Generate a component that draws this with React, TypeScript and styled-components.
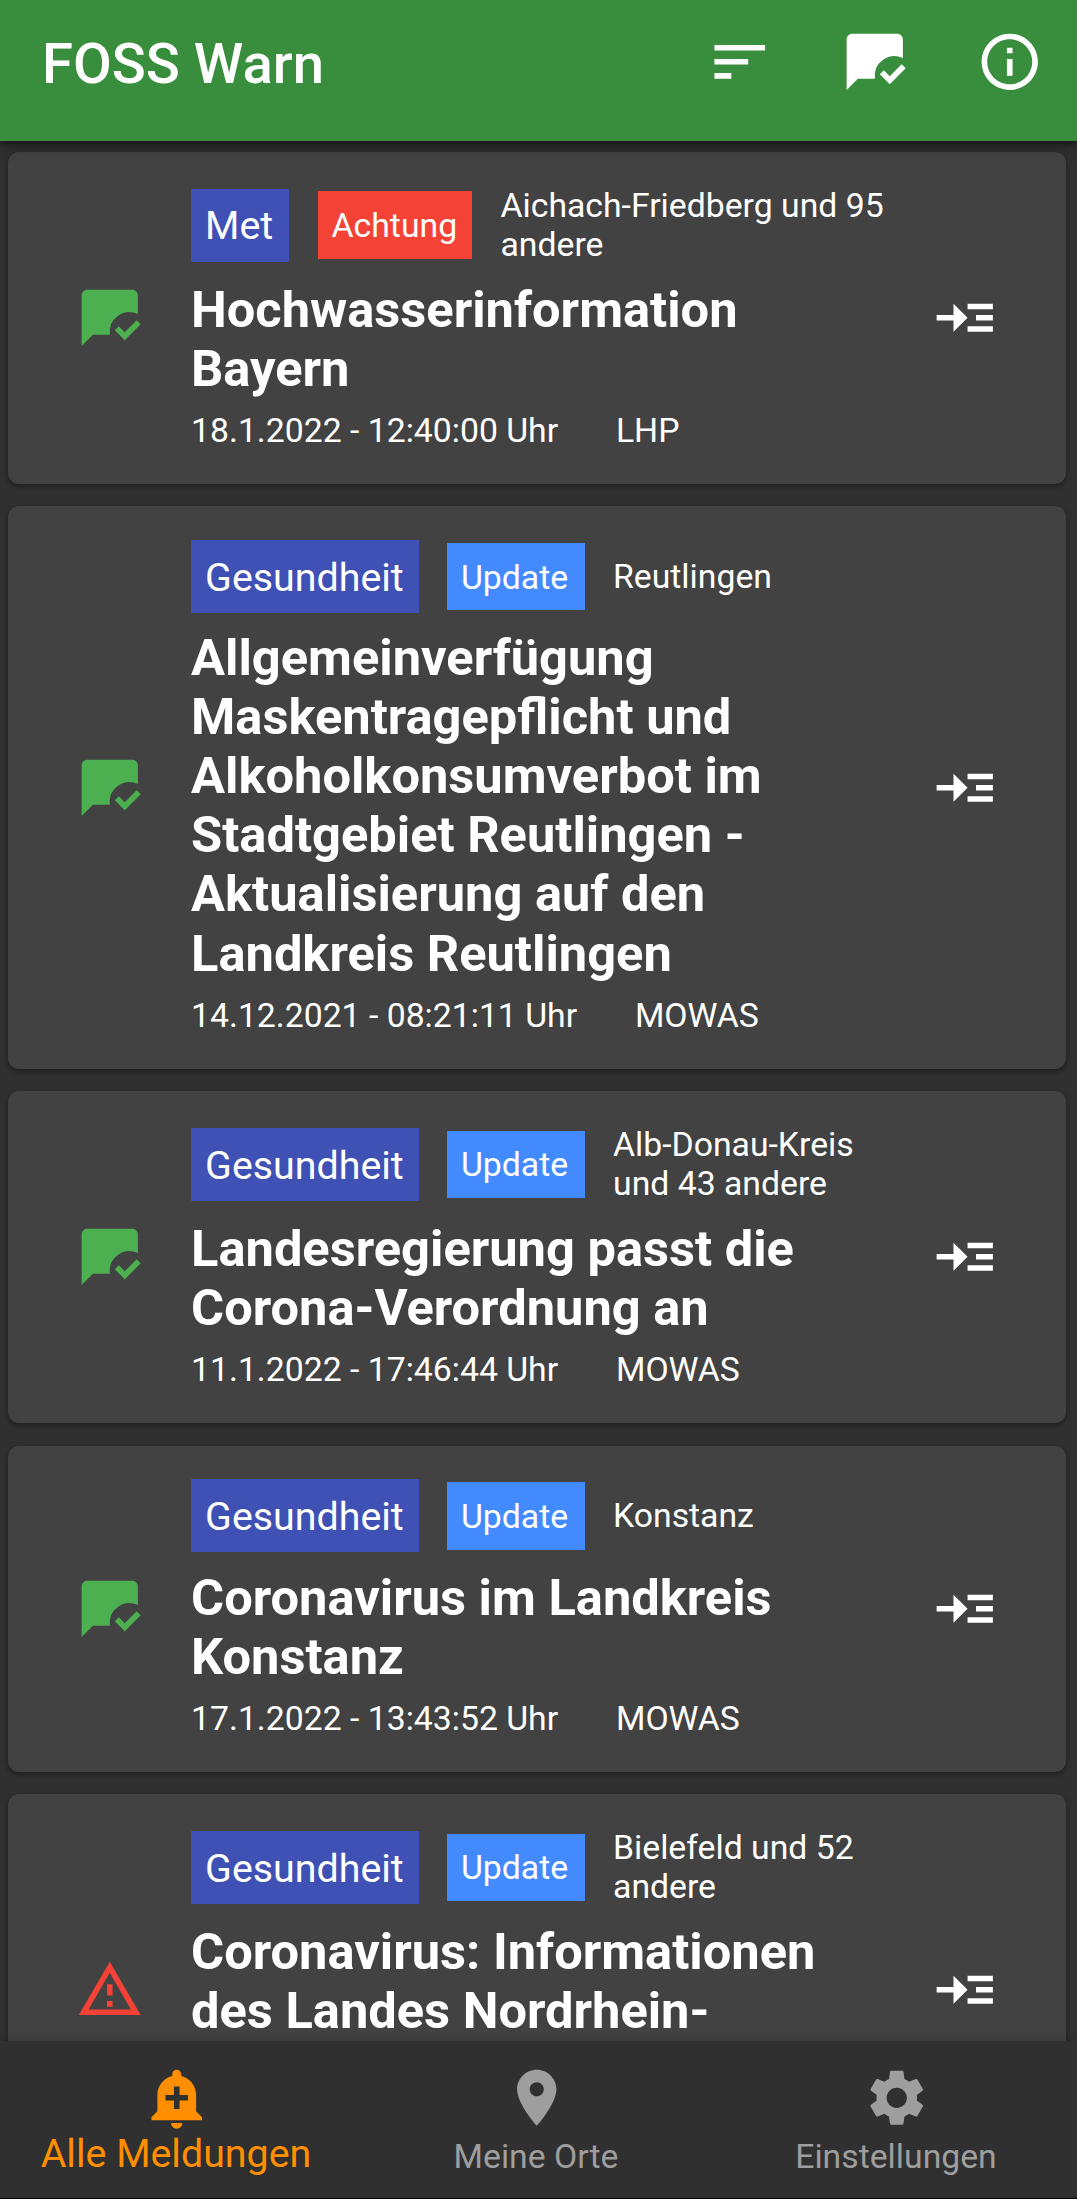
import React from 'react';
import styled, { createGlobalStyle } from 'styled-components';

const GlobalStyle = createGlobalStyle`
  *, *::before, *::after { box-sizing: border-box; }
  body {
    margin: 0;
    background: #303030;
    font-family: Roboto, "Liberation Sans", sans-serif;
    color: #fff;
  }
`;

const Screen = styled.div`
  display: flex;
  flex-direction: column;
  width: 1077px;
  height: 2199px;
  overflow: hidden;
  background: #303030;
`;

const AppBar = styled.header`
  display: flex;
  align-items: center;
  flex: none;
  height: 140.6px;
  padding: 0 0 16.4px 42px;
  background: #388e3c;
  box-shadow: 0 5px 12px rgba(0, 0, 0, 0.4), 0 2px 5px rgba(0, 0, 0, 0.3);
  z-index: 1;
`;

const AppTitle = styled.h1`
  flex: 1;
  margin: 0;
  padding-top: 3px;
  font-size: 56.25px;
  font-weight: 500;
  line-height: 66px;
`;

const IconButton = styled.button<{ $color?: string }>`
  display: flex;
  align-items: center;
  justify-content: center;
  flex: none;
  width: 135px;
  height: 124px;
  padding: 0;
  border: 0;
  background: none;
  color: ${(p) => p.$color ?? '#fff'};
`;

const Svg = styled.svg`
  display: block;
  flex: none;
  width: 67.5px;
  height: 67.5px;
  fill: currentColor;
`;

const List = styled.main`
  display: flex;
  flex-direction: column;
  flex: 1;
  min-height: 0;
  gap: 22.5px;
  padding: 11.4px 11.25px 0 8.25px;
  overflow: hidden;
`;

const Card = styled.article`
  display: flex;
  align-items: center;
  flex: none;
  padding: 33.75px;
  border-radius: 11.25px;
  background: #424242;
  box-shadow: 0 3px 4px rgba(0, 0, 0, 0.22), 0 1px 5px rgba(0, 0, 0, 0.18);
`;

const CardBody = styled.div`
  display: flex;
  flex-direction: column;
  flex: 1;
  min-width: 0;
  gap: 14.06px;
  padding-left: 14.06px;
`;

const TagRow = styled.div`
  display: flex;
  align-items: center;
  gap: 28.1px;
`;

const CategoryTag = styled.span<{ $width: number }>`
  flex: none;
  width: ${(p) => p.$width}px;
  padding: 14.76px 0 13.36px 14.06px;
  background: #3f51b5;
  font-size: 39.375px;
  line-height: 45px;
  white-space: nowrap;
`;

const StatusTag = styled.span<{ $color: string; $width: number }>`
  flex: none;
  width: ${(p) => p.$width}px;
  padding: 14.76px 0 13.36px 14.06px;
  background: ${(p) => p.$color};
  font-size: 33.75px;
  line-height: 39.375px;
  white-space: nowrap;
`;

const Place = styled.span`
  flex: 1;
  min-width: 0;
  font-size: 33.75px;
  line-height: 39.375px;
`;

const Headline = styled.h2<{ $minLines: number }>`
  min-height: ${(p) => p.$minLines * 59.06}px;
  margin: 1px 0 -1px;
  font-size: 50.625px;
  font-weight: 700;
  line-height: 59.06px;
`;

const Meta = styled.div`
  display: flex;
  gap: 57.8px;
  min-height: 39.375px;
  font-size: 33.75px;
  line-height: 39.375px;
`;

const NavBar = styled.nav`
  display: grid;
  grid-template-columns: 357fr 360fr 360fr;
  flex: none;
  height: 158.5px;
  border-bottom: 1px solid #000;
  background: #303030;
  box-shadow: 0 -2px 8px rgba(0, 0, 0, 0.12);
  z-index: 1;
`;

const NavItem = styled.a<{ $active?: boolean }>`
  display: flex;
  flex-direction: column;
  align-items: center;
  justify-content: space-between;
  padding: ${(p) => (p.$active ? '23.2px 3px 22.2px 0' : '23.2px 0 22.2px')};
  color: ${(p) => (p.$active ? '#ff8f00' : '#9e9e9e')};
  font-size: ${(p) => (p.$active ? '39.375px' : '33.75px')};
  line-height: ${(p) => (p.$active ? '45px' : '39.375px')};
  white-space: nowrap;
`;

const NavLabel = styled.span`
  margin-right: 2px;
`;

const icons = {
  sort: 'M3 18h6v-2H3v2zM3 6v2h18V6H3zm0 7h12v-2H3v2z',
  chatRead:
    'M4 2h16c1.1 0 2 .9 2 2v6.67A7 7 0 0 0 12.07 18H6l-4 4V4c0-1.1.9-2 2-2zM17.34 20l-3.54-3.54 1.41-1.41 2.12 2.12 4.24-4.24L23 14.34z',
  info:
    'M11 7h2v2h-2zm0 4h2v6h-2zm1-9C6.48 2 2 6.48 2 12s4.48 10 10 10 10-4.48 10-10S17.52 2 12 2zm0 18c-4.41 0-8-3.59-8-8s3.59-8 8-8 8 3.59 8 8-3.59 8-8 8z',
  readMore: 'M22 7h-9v2h9V7zm0 8h-9v2h9v-2zm0-4h-6v2h6v-2zm-9 1L8 7v4H2v2h6v4z',
  warning:
    'M12 5.99L19.53 19H4.47L12 5.99M12 2L1 21h22L12 2zm1 14h-2v2h2v-2zm0-6h-2v4h2v-4z',
  addAlert:
    'M10.01 21.01c0 1.1.89 1.99 1.99 1.99s1.99-.89 1.99-1.99h-3.98zm8.87-4.19V11c0-3.25-2.25-5.97-5.29-6.69v-.72C13.59 2.71 12.88 2 12 2s-1.59.71-1.59 1.59v.72C7.37 5.03 5.12 7.75 5.12 11v5.82L3 18.94V20h18v-1.06l-2.12-2.12zM16 13.01h-3v3h-2v-3H8V11h3V8h2v3h3v2.01z',
  place:
    'M12 2C8.13 2 5 5.13 5 9c0 5.25 7 13 7 13s7-7.75 7-13c0-3.87-3.13-7-7-7zm0 9.5c-1.38 0-2.5-1.12-2.5-2.5s1.12-2.5 2.5-2.5 2.5 1.12 2.5 2.5-1.12 2.5-2.5 2.5z',
  settings:
    'M19.14 12.94c.04-.3.06-.61.06-.94 0-.32-.02-.64-.07-.94l2.03-1.58c.18-.14.23-.41.12-.61l-1.92-3.32c-.12-.22-.37-.29-.59-.22l-2.39.96c-.5-.38-1.03-.7-1.62-.94l-.36-2.54c-.04-.24-.24-.41-.48-.41h-3.84c-.24 0-.43.17-.47.41l-.36 2.54c-.59.24-1.13.57-1.62.94l-2.39-.96c-.22-.08-.47 0-.59.22L2.74 8.87c-.12.21-.08.47.12.61l2.03 1.58c-.05.3-.09.63-.09.94s.02.64.07.94l-2.03 1.58c-.18.14-.23.41-.12.61l1.92 3.32c.12.22.37.29.59.22l2.39-.96c.5.38 1.03.7 1.62.94l.36 2.54c.05.24.24.41.48.41h3.84c.24 0 .44-.17.47-.41l.36-2.54c.59-.24 1.13-.56 1.62-.94l2.39.96c.22.08.47 0 .59-.22l1.92-3.32c.12-.22.07-.47-.12-.61l-2.01-1.58zM12 15.6c-1.98 0-3.6-1.62-3.6-3.6s1.62-3.6 3.6-3.6 3.6 1.62 3.6 3.6-1.62 3.6-3.6 3.6z',
};

function Icon({ name }: { name: keyof typeof icons }) {
  return (
    <Svg viewBox="0 0 24 24" aria-hidden="true">
      <path d={icons[name]} />
    </Svg>
  );
}

const GREEN = '#4caf50';
const RED = '#f44336';

const categories = {
  met: { label: 'Met', width: 98.4 },
  health: { label: 'Gesundheit', width: 227.8 },
};

const statuses = {
  alert: { label: 'Achtung', color: RED, width: 154.9 },
  update: { label: 'Update', color: '#448aff', width: 138 },
};

interface Warning {
  category: keyof typeof categories;
  status: keyof typeof statuses;
  place: string;
  title: string;
  minLines?: number;
  date?: string;
  source?: string;
  read: boolean;
}

const warnings: Warning[] = [
  {
    category: 'met',
    status: 'alert',
    place: 'Aichach-Friedberg und 95 andere',
    title: 'Hochwasserinformation Bayern',
    date: '18.1.2022 - 12:40:00 Uhr',
    source: 'LHP',
    read: true,
  },
  {
    category: 'health',
    status: 'update',
    place: 'Reutlingen',
    title:
      'Allgemeinverfügung Maskentragepflicht und Alkoholkonsumverbot im Stadtgebiet Reutlingen - Aktualisierung auf den Landkreis Reutlingen',
    date: '14.12.2021 - 08:21:11 Uhr',
    source: 'MOWAS',
    read: true,
  },
  {
    category: 'health',
    status: 'update',
    place: 'Alb-Donau-Kreis und 43 andere',
    title: 'Landesregierung passt die Corona-Verordnung an',
    date: '11.1.2022 - 17:46:44 Uhr',
    source: 'MOWAS',
    read: true,
  },
  {
    category: 'health',
    status: 'update',
    place: 'Konstanz',
    title: 'Coronavirus im Landkreis Konstanz',
    date: '17.1.2022 - 13:43:52 Uhr',
    source: 'MOWAS',
    read: true,
  },
  {
    category: 'health',
    status: 'update',
    place: 'Bielefeld und 52 andere',
    title: 'Coronavirus: Informationen des Landes Nordrhein-',
    minLines: 3,
    read: false,
  },
];

function WarningCard({ item }: { item: Warning }) {
  const category = categories[item.category];
  const status = statuses[item.status];
  return (
    <Card>
      <IconButton $color={item.read ? GREEN : RED}>
        <Icon name={item.read ? 'chatRead' : 'warning'} />
      </IconButton>
      <CardBody>
        <TagRow>
          <CategoryTag $width={category.width}>{category.label}</CategoryTag>
          <StatusTag $color={status.color} $width={status.width}>
            {status.label}
          </StatusTag>
          <Place>{item.place}</Place>
        </TagRow>
        <Headline $minLines={item.minLines ?? 1}>{item.title}</Headline>
        <Meta>
          {item.date && <span>{item.date}</span>}
          {item.source && <span>{item.source}</span>}
        </Meta>
      </CardBody>
      <IconButton>
        <Icon name="readMore" />
      </IconButton>
    </Card>
  );
}

export default function App() {
  return (
    <>
      <GlobalStyle />
      <Screen>
        <AppBar>
          <AppTitle>FOSS Warn</AppTitle>
          <IconButton>
            <Icon name="sort" />
          </IconButton>
          <IconButton>
            <Icon name="chatRead" />
          </IconButton>
          <IconButton>
            <Icon name="info" />
          </IconButton>
        </AppBar>
        <List>
          {warnings.map((item) => (
            <WarningCard key={item.title} item={item} />
          ))}
        </List>
        <NavBar>
          <NavItem $active>
            <Icon name="addAlert" />
            <NavLabel>Alle Meldungen</NavLabel>
          </NavItem>
          <NavItem>
            <Icon name="place" />
            <NavLabel>Meine Orte</NavLabel>
          </NavItem>
          <NavItem>
            <Icon name="settings" />
            <NavLabel>Einstellungen</NavLabel>
          </NavItem>
        </NavBar>
      </Screen>
    </>
  );
}
